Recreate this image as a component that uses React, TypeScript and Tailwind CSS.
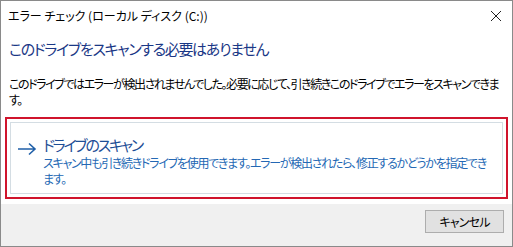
import React from 'react';

const font = "font-['Noto_Sans_CJK_JP','Noto_Sans',sans-serif] [font-feature-settings:'palt']";

export default function App() {
  return (
    <div className={`w-[513px] h-[247px] border border-[#8a8a8a] bg-white flex flex-col text-black ${font}`}>
      {/* Title bar */}
      <div className="h-[30px] flex items-center justify-between pl-[7px] pr-[8px]">
        <span className="text-[12px] leading-none">エラー チェック (ローカル ディスク (C:))</span>
        <svg width="12" height="12" viewBox="0 0 12 12" className="mr-[2px]">
          <path d="M1 1 L11 11 M11 1 L1 11" stroke="#222" strokeWidth="1" fill="none" />
        </svg>
      </div>

      {/* Heading */}
      <div className="pl-[8px] mt-[8px] text-[15px] leading-[20px] tracking-[-1.3px] text-[#1a3786]">
        このドライブをスキャンする必要はありません
      </div>

      {/* Body */}
      <div className="pl-[8px] mt-[17px] text-[12px] leading-[16px] tracking-[-1.42px] whitespace-nowrap">
        <div>このドライブではエラーが検出されませんでした。必要に応じて、引き続きこのドライブでエラーをスキャンできま</div>
        <div>す。</div>
      </div>

      {/* Scan option */}
      <div className="mx-[4px] mt-[9px] border-2 border-[#d0142c] p-[3px]">
        <button className="w-full h-[72px] border border-[#d4dde3] bg-white flex items-start pl-[6px] pt-[13px] text-left">
          <svg width="20" height="14" viewBox="0 0 20 14" className="mt-[6px] shrink-0">
            <path d="M1 7 H18 M12 1.5 L18 7 L12 12.5" stroke="#1f5fa8" strokeWidth="1.6" fill="none" />
          </svg>
          <div className="ml-[6px]">
            <div className="text-[15px] leading-[18px] tracking-[-2.2px] text-[#1f4f96]">ドライブのスキャン</div>
            <div className="mt-[1px] text-[12px] leading-[16px] tracking-[-1.28px] text-[#2468b4] whitespace-nowrap">
              <div>スキャン中も引き続きドライブを使用できます。エラーが検出されたら、修正するかどうかを指定でき</div>
              <div>ます。</div>
            </div>
          </div>
        </button>
      </div>

      {/* Footer */}
      <div className="mt-[5px] flex-1 bg-[#f0f0f0] flex justify-end items-start pt-[6px] pr-[8px]">
        <button className="w-[79px] h-[23px] border border-[#adadad] bg-[#e1e1e1] text-[12px] leading-none tracking-[-0.8px]">
          キャンセル
        </button>
      </div>
    </div>
  );
}
